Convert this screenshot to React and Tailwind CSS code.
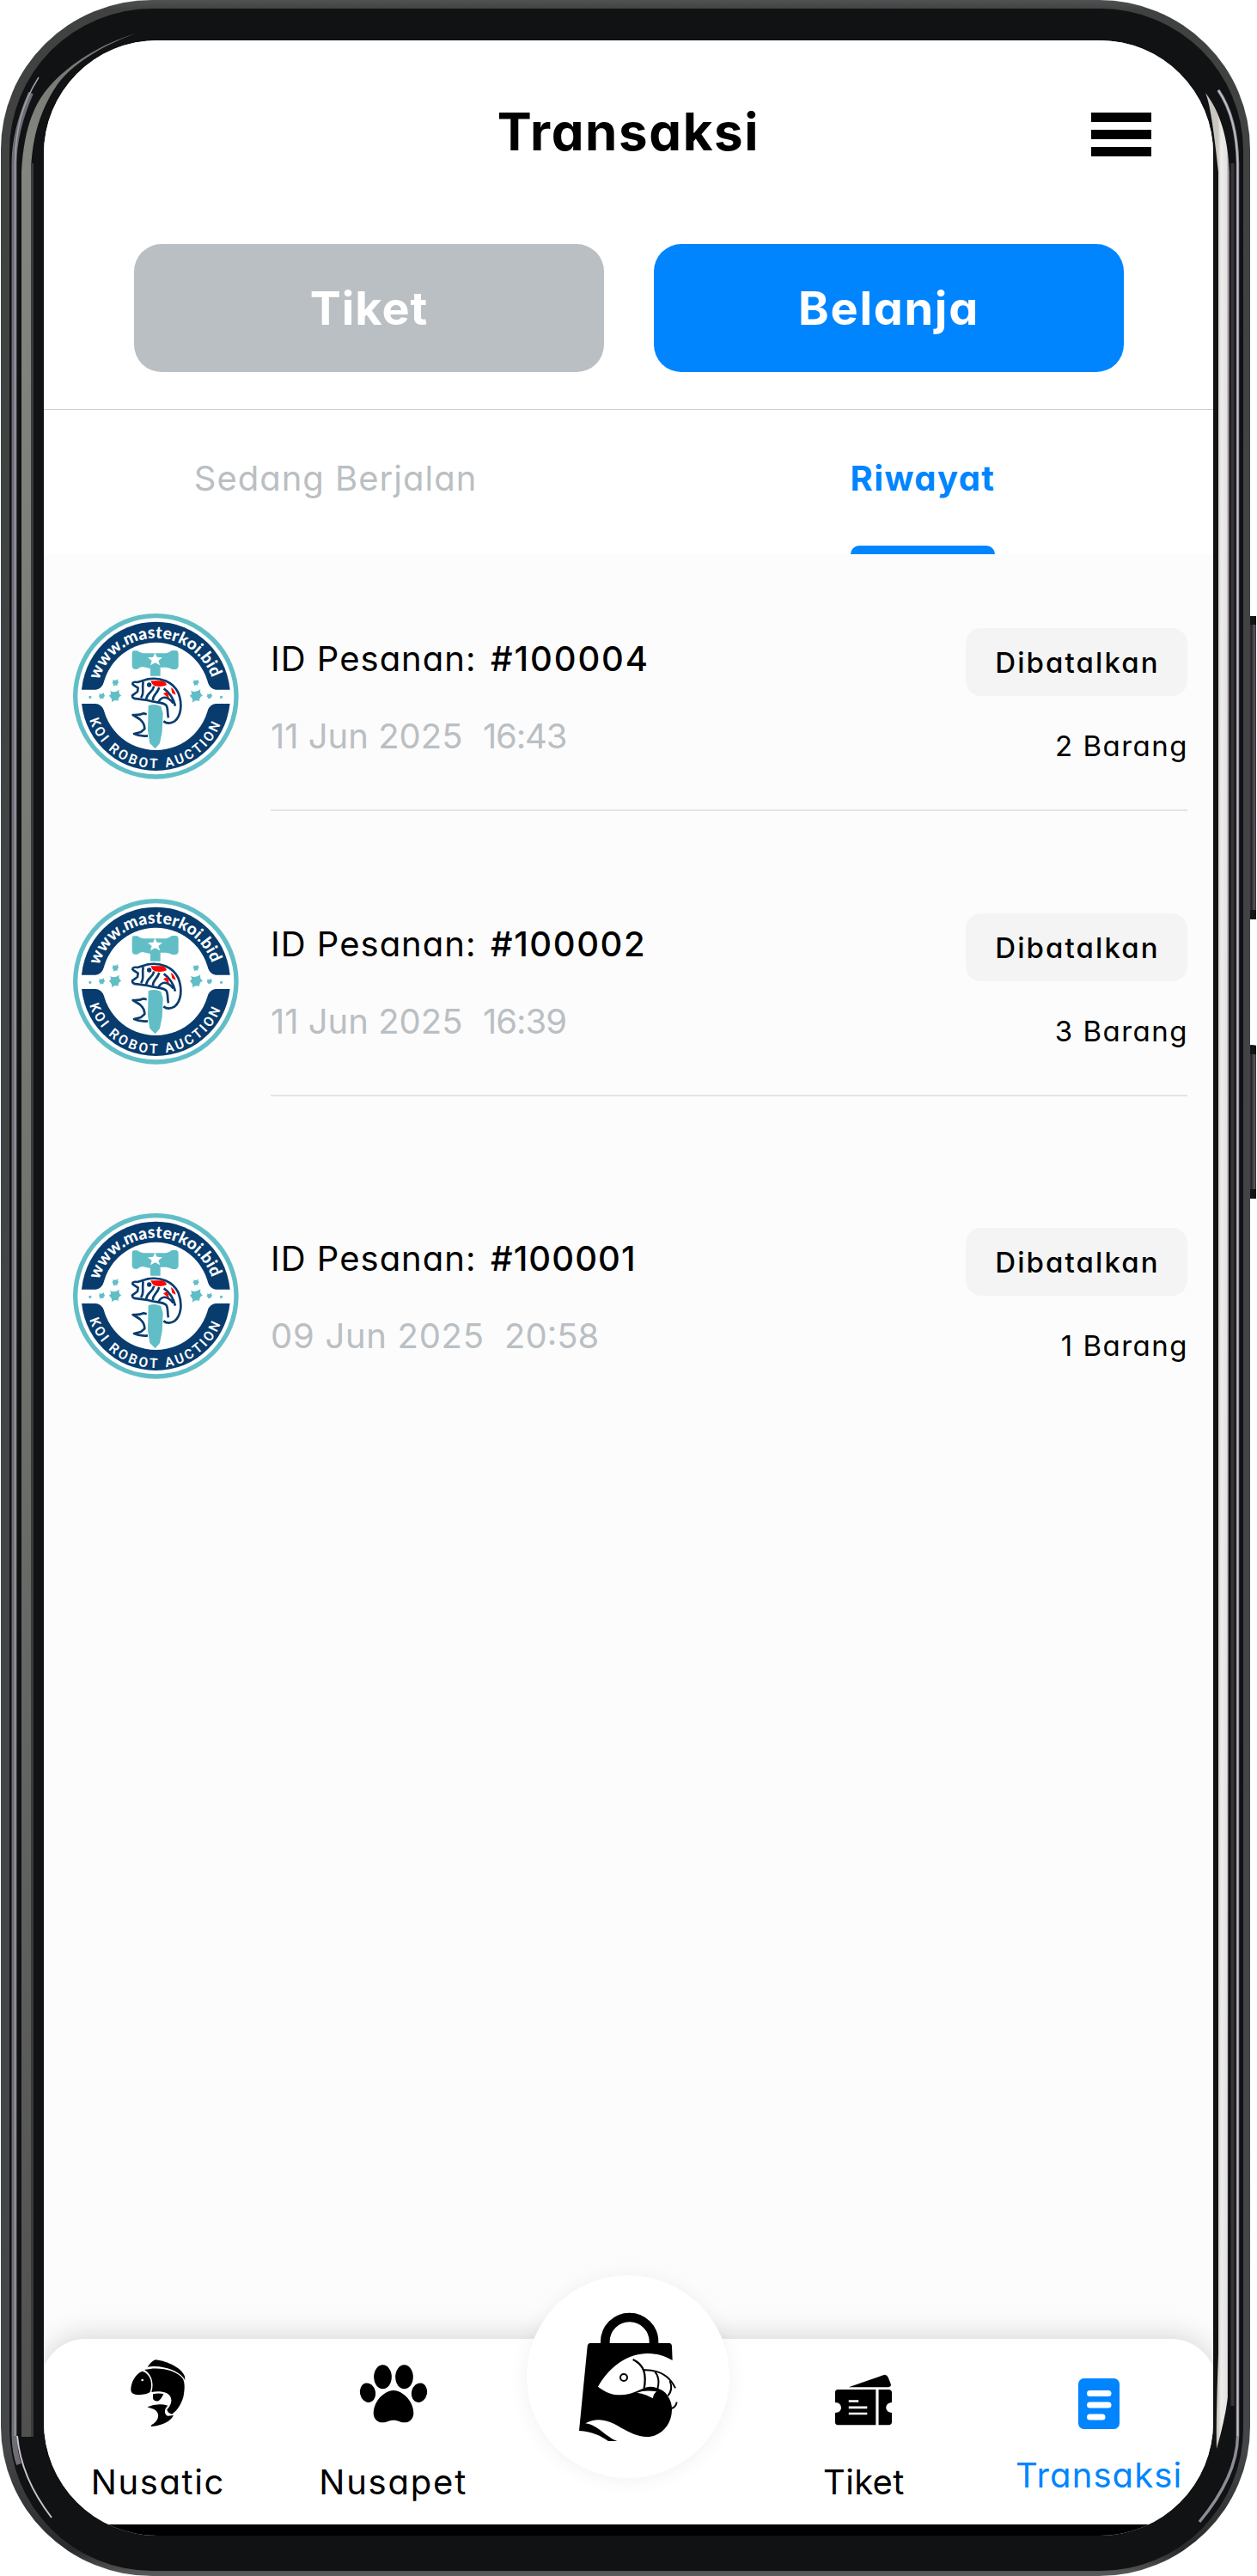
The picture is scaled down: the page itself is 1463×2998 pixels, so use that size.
const ORDERS = [
  { id: "#100004", date: "11 Jun 2025", time: "16:43", count: "2 Barang", idCls: "tracking-[1.9px]", dateCls: "tracking-[0px] w-[247px]", timeCls: "tracking-[-1.2px]", row: "h-[332px]", line: "border-[#e4e4e4]" },
  { id: "#100002", date: "11 Jun 2025", time: "16:39", count: "3 Barang", idCls: "tracking-[1.6px]", dateCls: "tracking-[0px] w-[247px]", timeCls: "tracking-[-1px]", row: "h-[366px]", line: "border-[#e4e4e4]" },
  { id: "#100001", date: "09 Jun 2025", time: "20:58", count: "1 Barang", idCls: "tracking-[1.1px]", dateCls: "tracking-[0.7px] w-[272px]", timeCls: "tracking-[0px]", row: "h-[332px]", line: "border-transparent" },
];

function PhoneFrame() {
  return (
    <svg className="absolute inset-0 h-[2998px] w-[1463px]" viewBox="0 0 1463 2998" aria-hidden="true">
      <defs>
        <linearGradient id="edge" x1="0" y1="0" x2="0" y2="2998" gradientUnits="userSpaceOnUse">
          <stop offset="0" stopColor="#505151" />
          <stop offset="0.004" stopColor="#404141" />
          <stop offset="0.95" stopColor="#454648" />
          <stop offset="0.99" stopColor="#2a2b2d" />
          <stop offset="1" stopColor="#5c5c5c" />
        </linearGradient>
        <linearGradient id="leftWide" x1="0" y1="80" x2="0" y2="2840" gradientUnits="userSpaceOnUse">
          <stop offset="0" stopColor="#777975" />
          <stop offset="0.03" stopColor="#83857f" />
          <stop offset="0.5" stopColor="#71736f" />
          <stop offset="1" stopColor="#50514f" />
        </linearGradient>
        <linearGradient id="rightWide" x1="1417" y1="0" x2="1431" y2="0" gradientUnits="userSpaceOnUse">
          <stop offset="0" stopColor="#c9c6c0" />
          <stop offset="0.3" stopColor="#efedea" />
          <stop offset="0.75" stopColor="#e4e3e4" />
          <stop offset="1" stopColor="#777078" />
        </linearGradient>
        <linearGradient id="volume" x1="1453" y1="0" x2="1462" y2="0" gradientUnits="userSpaceOnUse">
          <stop offset="0" stopColor="#4b494d" />
          <stop offset="0.4" stopColor="#262429" />
          <stop offset="0.8" stopColor="#5d5a61" />
          <stop offset="1" stopColor="#29272b" />
        </linearGradient>
      </defs>
      <rect x="1452" y="717" width="10" height="353" rx="2" fill="url(#volume)" />
      <rect x="1453" y="717" width="9" height="10" fill="#141316" />
      <rect x="1453" y="1059" width="9" height="11" fill="#141316" />
      <rect x="1452" y="1216" width="10" height="179" rx="2" fill="url(#volume)" />
      <rect x="1453" y="1217" width="9" height="10" fill="#141316" />
      <rect x="1453" y="1384" width="9" height="11" fill="#141316" />
      <rect x="1" y="0" width="1454" height="2998" rx="176" ry="174" fill="url(#edge)" />
      <rect x="11" y="10" width="1436" height="2982" rx="166" ry="166" fill="#111213" />
      <g fill="none">
        <path d="M36 108 C22 140 16.500 165 16.500 190 V2835 C17 2850 19 2860 22 2868" stroke="#6e6c75" strokeWidth="6" />
        <path d="M45 90 C26 120 18 150 17.500 190 V2835" stroke="#a3a0aa" strokeWidth="1.500" />
        <path d="M20 2835 C23 2868 37 2900 60 2930" stroke="#c9c5cc" strokeWidth="2" />
        <path d="M1418 105 C1435 130 1440 160 1440.500 190 V2835 C1440 2865 1425 2900 1396 2935" stroke="#8f8b96" strokeWidth="3.500" />
        <path d="M1418 105 C1435 130 1439.500 160 1440.500 190 V2835" stroke="#c6c2ce" strokeWidth="1.500" />
      </g>
      <path d="M158 39 C120 50 82 73 58 100 C42 118 28 145 25 200 V2836 H36 V200 C37 168 43 133 67 98 C84 75 118 53 158 39Z" fill="url(#leftWide)" />
      <path d="M1403 108 C1408 120 1412 145 1418 200 V2740 Q1415 2820 1416 2850 Q1426 2815 1429 2790 L1431 200 C1429 160 1420 130 1403 108Z" fill="url(#rightWide)" />
      <path d="M37.500 190 V2836" stroke="#3a3a3b" strokeWidth="3" />
      <path d="M1434.500 190 V2800" stroke="#3a3338" strokeWidth="4" />
    </svg>
  );
}

function Spark({ x, y, r }) {
  return (
    <path
      transform={`translate(${x} ${y}) scale(${r})`}
      d="M-1 -0.9 Q-0.200 -0.400 0.700 -1.100 Q0.500 -0.400 1.100 0 Q0.500 0.100 0.500 1 Q0 0.600 -0.700 1.200 Q-0.500 0.500 -1.200 0 Q-0.600 -0.200 -1 -0.900Z"
      fill="#62bec6"
    />
  );
}

function Logo({ uid }) {
  return (
    <svg className="h-[195px] w-[195px] shrink-0" viewBox="72 69 585 585">
      <defs>
        <path id={`top-${uid}`} d="M165 308 A207 207 0 0 1 563 308" />
        <path id={`bottom-${uid}`} d="M126 418 A243 243 0 0 0 602 418" />
      </defs>
      <circle cx="364" cy="361" r="289" fill="#62bec6" />
      <circle cx="364" cy="361" r="273" fill="#fff" />
      <circle cx="364" cy="361" r="260" fill="#083c6e" />
      <circle cx="364" cy="361" r="188" fill="#fff" />
      <path d="M95 338 H155 Q175 336 184 310 L544 310 Q553 336 573 338 H633 V387 H573 Q553 389 544 412 H184 Q175 389 155 387 H95Z" fill="#fff" />
      <text fontFamily="Lato" fontWeight="900" fontSize="58" fill="#fff">
        <textPath href={`#top-${uid}`} startOffset="3" textLength="520" lengthAdjust="spacing">www.masterkoi.bid</textPath>
      </text>
      <text fontFamily="Roboto" fontWeight="600" fontSize="47" fill="#fff">
        <textPath href={`#bottom-${uid}`} startOffset="26" textLength="596" lengthAdjust="spacing">KOI ROBOT AUCTION</textPath>
      </text>
      <path d="M285 202 H300 Q308 210 320 211 H400 Q412 208 420 201 H436 Q443 203 443 212 V255 Q442 265 434 267 H422 Q410 261 400 260 H380 V290 H345 V264 L318 258 Q308 258 300 266 H288 Q281 262 281 254 V212 Q281 204 285 202Z" fill="#62bec6" />
      <path d="M361 209 L368 224 L387 226 L373 237 L379 253 L362 244 L345 253 L350 237 L336 226 L355 224Z" fill="#fff" />
      <Spark x={223} y={359} r={19} />
      <Spark x={224} y={313} r={11} />
      <Spark x={176} y={360} r={10} />
      <Spark x={135} y={364} r={5} />
      <Spark x={506} y={359} r={20} />
      <Spark x={505} y={313} r={10} />
      <Spark x={552} y={360} r={9} />
      <Spark x={593} y={364} r={5} />
      <path d="M332 302 C380 292 425 310 443 350 C458 390 452 430 430 448 C415 457 400 455 391 448 M283 320 Q281 309 300 312 L332 302 M283 320 L302 332 L300 345 L282 358 Q281 370 300 370 L335 375 C370 385 395 382 402 395 C408 410 404 425 408 436 M320 310 C315 340 325 350 312 366 M358 326 C352 350 335 345 330 372 M376 330 C368 356 352 355 354 376 M392 334 C412 348 425 365 432 395 M372 383 C385 358 405 360 425 385 M332 424 L322 421 Q305 428 284 426 L308 441 Q325 455 325 475 L312 486 L288 492 Q310 502 336 499" fill="none" stroke="#083c6e" strokeWidth="8" strokeLinejoin="round" />
      <circle cx="341" cy="321" r="8" fill="#083c6e" />
      <path d="M346 307 H385 Q400 310 402 322 Q385 330 360 325 Q350 320 346 307Z M390 352 L405 344 L411 370Z M417 330 Q430 338 434 356 L421 350Z" fill="#fb0505" />
      <path d="M338 394 Q360 385 382 396 L389 420 L386 485 L378 525 L362 544 L343 525 L336 480Z" fill="#62bec6" />
    </svg>
  );
}

function OrderRow({ order }) {
  return (
    <article className={`flex shrink-0 gap-9 pl-[33px] pr-[30px] pt-[68px] ${order.row}`}>
      <Logo uid={order.id.slice(1)} />
      <div className={`flex h-[231px] flex-1 justify-between border-b-2 ${order.line}`}>
        <div className="flex flex-col pt-[28px]">
          <p className="flex h-[52px] items-center text-[40px] leading-none">
            <span className="w-[256px] font-[370] tracking-[1px]">ID Pesanan:</span>
            <span className={`font-medium ${order.idCls}`}>{order.id}</span>
          </p>
          <p className="mt-[38px] flex h-[52px] items-center text-[40px] font-[370] leading-none text-[#babfc3]">
            <span className={order.dateCls}>{order.date}</span>
            <span className={order.timeCls}>{order.time}</span>
          </p>
        </div>
        <div className="flex flex-col items-end pt-[18px]">
          <span className="flex h-[79px] w-[258px] items-center justify-center rounded-[18px] bg-[#f4f4f4] pt-px pl-0.5 text-[33px] font-medium leading-none tracking-[2.1px]">
            Dibatalkan
          </span>
          <span className="-mr-px mt-[37px] flex h-[42px] items-center text-[33px] font-[370] leading-none tracking-[1.5px]">{order.count}</span>
        </div>
      </div>
    </article>
  );
}

function FishIcon() {
  return (
    <svg className="h-[78px] w-[64px]" viewBox="340 319 192 234">
      <path d="M381 360C358 368 340 400 341 425C341 440 358 444 375 442C392 440 405 438 409 430C417 405 412 370 381 360Z" />
      <path d="M399 345Q415 322 428 320C470 325 520 350 529 378L530 391C515 365 480 350 440 344Q415 341 399 345Z" />
      <path d="M388 355C440 342 500 357 521 384C532 400 528 430 524 450C515 480 500 500 484 510C475 508 468 502 467 494C490 470 485 445 465 436C450 430 430 430 413 433C422 405 415 370 388 355Z" />
      <path d="M418 440Q435 435 455 439Q447 458 437 464Q420 466 418 455Z" />
      <path d="M398 485Q435 470 470 480C457 490 456 512 470 516L490 514C480 535 450 550 412 553C409 550 412 548 420 543C444 525 440 500 420 492Z" />
      <circle cx="381" cy="391" r="4" fill="#fff" />
    </svg>
  );
}

function PawIcon() {
  return (
    <svg className="h-[68px] w-[80px]" viewBox="1136 335 240 204">
      <ellipse cx="1218.500" cy="378" rx="31" ry="42" />
      <ellipse cx="1293.500" cy="378" rx="31" ry="42" />
      <ellipse cx="1166" cy="433" rx="27" ry="34" transform="rotate(-12 1166 433)" />
      <ellipse cx="1346" cy="433" rx="27" ry="34" transform="rotate(12 1346 433)" />
      <path d="M1256 425C1225 425 1186 462 1186 505C1187 525 1200 537 1218 537C1235 537 1238 529 1256 529C1274 529 1277 537 1294 537C1312 537 1325 525 1326 505C1326 462 1287 425 1256 425Z" />
    </svg>
  );
}

function TicketIcon() {
  return (
    <svg className="h-[60px] w-[66px]" viewBox="202 367 184 180" preserveAspectRatio="none">
      <path d="M246 413L362 369Q370 369 374 378L383 403Q384 411 376 413Z" />
      <path d="M211 421H334V545H211Q202 544 202 536V502C228 502 228 466 202 466V430Q202 422 211 421Z" />
      <path d="M343 421H376Q385 422 386 430V466C361 468 361 500 386 502V536Q385 544 376 545H343Z" />
      <path d="M246 461.500H278M246 483.500H306M246 505H306" stroke="#fff" strokeWidth="8" />
    </svg>
  );
}

function DocIcon() {
  return (
    <svg className="h-[59px] w-[48px]" viewBox="0 0 48 59">
      <rect width="48" height="59" rx="6.500" fill="#0085ff" />
      <path d="M13.500 17.500H35M13.500 31H35M13.500 45H28" stroke="#fff" strokeWidth="7" strokeLinecap="round" />
    </svg>
  );
}

function BagIcon() {
  return (
    <svg className="h-[151px] w-[115px]" viewBox="345 180 345 453">
      <path d="M436 295V283A85 85 0 0 1 606 283V295" fill="none" stroke="#000" strokeWidth="32" />
      <path d="M384 288H660Q669 289 669 300L671 348C630 325 590 320 560 326C510 332 450 370 411 440C440 462 460 469 490 469C530 468 550 452 577 443C600 436 630 445 647 462C662 480 669 498 669 520C669 575 630 615 580 615C550 615 520 600 490 583C450 558 410 545 367 568C400 572 420 595 440 608C455 618 465 626 478 630H447C420 612 395 597 345 594L374 299Q375 289 384 288Z" />
      <path d="M547 461Q575 450 616 457Q604 464 603 481Q580 466 547 461Z" fill="#fff" />
      <g fill="none" stroke="#000" strokeWidth="6">
        <path d="M533 345C575 365 580 400 572 447" strokeWidth="7" />
        <path d="M570 382C625 380 660 400 681 445" />
        <path d="M610 388C624 405 625 425 619 447" />
        <path d="M662 420C670 440 667 458 655 472" />
        <path d="M686 494Q683 511 668 516" />
        <circle cx="501" cy="408" r="12" />
      </g>
    </svg>
  );
}

function NavItem({ icon, label, className }) {
  return (
    <div className={`flex flex-col items-center ${className}`}>
      {icon}
      <span className="mt-auto flex h-[50px] items-center whitespace-nowrap text-[40px] leading-none">{label}</span>
    </div>
  );
}

export default function App() {
  return (
    <main className="relative h-[2998px] w-[1463px] overflow-hidden bg-white pl-[51px] pt-[47px] font-['Inter',sans-serif] text-black [font-feature-settings:'cv11'] [font-optical-sizing:none]">
      <PhoneFrame />
      <div className="relative flex h-[2904px] w-[1361px] flex-col overflow-hidden rounded-[132px] bg-[#fcfcfc]">
        <header className="shrink-0 border-b border-[#cfcfcf] bg-white">
          <div className="grid h-[212px] grid-cols-[1fr_auto_1fr] items-center">
            <h1 className="col-start-2 text-[60px] font-bold leading-none tracking-[1.6px]">Transaksi</h1>
            <div className="mr-[72px] mt-[7px] flex w-[70px] flex-col gap-[9.500px] justify-self-end">
              <span className="h-[10.500px] bg-black" />
              <span className="h-[10.500px] bg-black" />
              <span className="h-[10.500px] bg-black" />
            </div>
          </div>
          <div className="flex gap-[58px] pb-[43px] pl-[105px] pt-[25px] text-[54px] font-bold leading-none text-white">
            <div className="flex h-[149px] w-[547px] items-center justify-center rounded-[32px] bg-[#babfc3] tracking-[1px]">Tiket</div>
            <div className="flex h-[149px] w-[547px] items-center justify-center rounded-[32px] bg-[#0085ff] tracking-[1.7px]">Belanja</div>
          </div>
        </header>
        <nav className="flex h-[168px] shrink-0 bg-white text-[40px] leading-none">
          <div className="flex w-[679px] shrink-0 justify-center pt-[60px] font-[370] tracking-[1px] text-[#babfc3]">Sedang Berjalan</div>
          <div className="flex w-[688px] shrink-0 flex-col items-center pt-[60px] font-bold tracking-[1.4px] text-[#0085ff]">
            Riwayat
            <span className="mt-auto h-[10px] w-[168px] rounded-t-[10px] bg-[#0085ff]" />
          </div>
        </nav>
        <section className="flex flex-1 flex-col">
          {ORDERS.map((order) => (
            <OrderRow key={order.id} order={order} />
          ))}
        </section>
        <footer className="relative -mx-1 grid h-[216px] shrink-0 grid-cols-5 rounded-t-[53px] bg-white py-6 font-[370] shadow-[0_-4px_32px_rgba(0,0,0,0.15)]">
          <NavItem icon={<FishIcon />} label="Nusatic" className="tracking-[1.600px]" />
          <NavItem icon={<div className="pt-[6px]"><PawIcon /></div>} label="Nusapet" className="tracking-[1.800px]" />
          <div className="-mt-[98px] flex h-[236px] w-[236px] items-center justify-center justify-self-center rounded-full bg-white shadow-[0_2px_24px_rgba(0,0,0,0.06)]">
            <BagIcon />
          </div>
          <NavItem icon={<div className="pt-[17px]"><TicketIcon /></div>} label="Tiket" className="tracking-[0.300px]" />
          <NavItem icon={<div className="pt-[22px]"><DocIcon /></div>} label="Transaksi" className="pb-2 tracking-[1.100px] text-[#0085ff]" />
        </footer>
        <div className="relative h-[13px] shrink-0 bg-black" />
      </div>
    </main>
  );
}
